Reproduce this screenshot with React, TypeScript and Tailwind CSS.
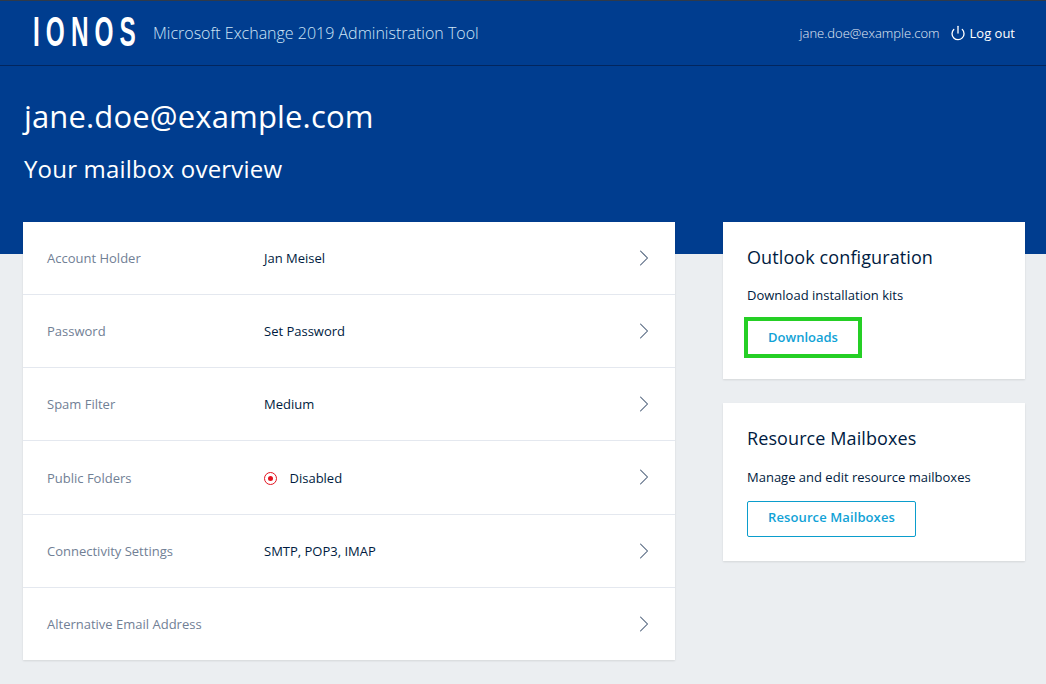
import { ChevronRight, Power } from "lucide-react";

const rows = [
  { label: "Account Holder", value: "Jan Meisel" },
  { label: "Password", value: "Set Password" },
  { label: "Spam Filter", value: "Medium" },
  { label: "Public Folders", value: "Disabled", disabled: true },
  { label: "Connectivity Settings", value: "SMTP, POP3, IMAP" },
  { label: "Alternative Email Address", value: "" },
];

function Row({ label, value, disabled }: { label: string; value: string; disabled?: boolean }) {
  return (
    <div className="flex h-[73.15px] items-center border-b border-[#e4e8ef] pl-6 pr-[17px] last:h-[72px] last:border-b-0">
      <span className="w-[217px] pt-[1.6px] text-[13px] text-[#718095]">{label}</span>
      <span className="flex flex-1 items-center pt-[1.6px] text-[13px] text-[#001b41]">
        {disabled && (
          <span className="mr-[12.5px] flex h-[13px] w-[13px] items-center justify-center rounded-full border border-[#e3131f]">
            <span className="h-[5px] w-[5px] rounded-full bg-[#e3131f]" />
          </span>
        )}
        {value}
      </span>
      <ChevronRight size={28} strokeWidth={0.9} className="text-[#465a75]" />
    </div>
  );
}

export default function App() {
  return (
    <div className="min-h-[684px] bg-[#ebeef1] font-['Open_Sans',sans-serif]">
      <div className="bg-[#003d8f] pb-[32px]">
        <header className="flex h-[66px] items-center border-t border-b border-t-[#2f3a4a] border-b-[#02265e] pl-[33px] pr-[31px] text-white">
          <span className="-mt-[3px] w-[120px] origin-left scale-x-[0.58] whitespace-nowrap font-['Liberation_Sans',sans-serif] text-[42px] leading-none font-bold tracking-[10.5px]">
            IONOS
          </span>
          <span className="text-[16px] font-light text-[#cfe6f7]">Microsoft Exchange 2019 Administration Tool</span>
          <span className="ml-auto pt-px text-[13px] font-light text-[#e2ecf7]">jane.doe@example.com</span>
          <Power size={16} strokeWidth={2} className="ml-[10px] mr-1" />
          <span className="pt-px text-[13px] font-medium">Log out</span>
        </header>
        <div className="px-6 text-white">
          <h1 className="mt-[28px] text-[31px] leading-[44px] font-normal tracking-[0.15px]">jane.doe@example.com</h1>
          <h2 className="mt-[15px] text-[24px] leading-[32px] font-normal tracking-[0.2px]">Your mailbox overview</h2>
        </div>
        <div className="h-[37px]" />
      </div>
      <div className="-mt-[32px] flex items-start pl-[23px]">
        <section className="w-[652px] bg-white shadow-[0_1px_2px_rgba(0,0,0,0.1)]">
          {rows.map((r) => (
            <Row key={r.label} {...r} />
          ))}
        </section>
        <aside className="ml-12 flex w-[302px] flex-col gap-6">
          <div className="h-[157px] bg-white px-6 pt-5 shadow-[0_1px_2px_rgba(0,0,0,0.1)]">
            <h3 className="text-[18px] leading-[30px] font-normal tracking-[0.1px] text-[#001b41]">Outlook configuration</h3>
            <p className="mt-[14px] text-[13px] leading-[18px] text-[#001b41]">Download installation kits</p>
            <button className="mt-[13px] -ml-[3px] h-[41px] w-[118px] border-4 border-[#25cf25] text-[13px] font-semibold text-[#11a2d6]">
              Downloads
            </button>
          </div>
          <div className="h-[158px] bg-white px-6 pt-5 shadow-[0_1px_2px_rgba(0,0,0,0.1)]">
            <h3 className="text-[18px] leading-[30px] font-normal tracking-[0.1px] text-[#001b41]">Resource Mailboxes</h3>
            <p className="mt-[15px] text-[13px] leading-[18px] text-[#001b41]">Manage and edit resource mailboxes</p>
            <button className="mt-[15px] h-9 w-[169px] rounded-[2px] border border-[#0b9dcc] pb-[2px] text-[13px] font-semibold tracking-[0.1px] text-[#11a2d6]">
              Resource Mailboxes
            </button>
          </div>
        </aside>
      </div>
    </div>
  );
}
